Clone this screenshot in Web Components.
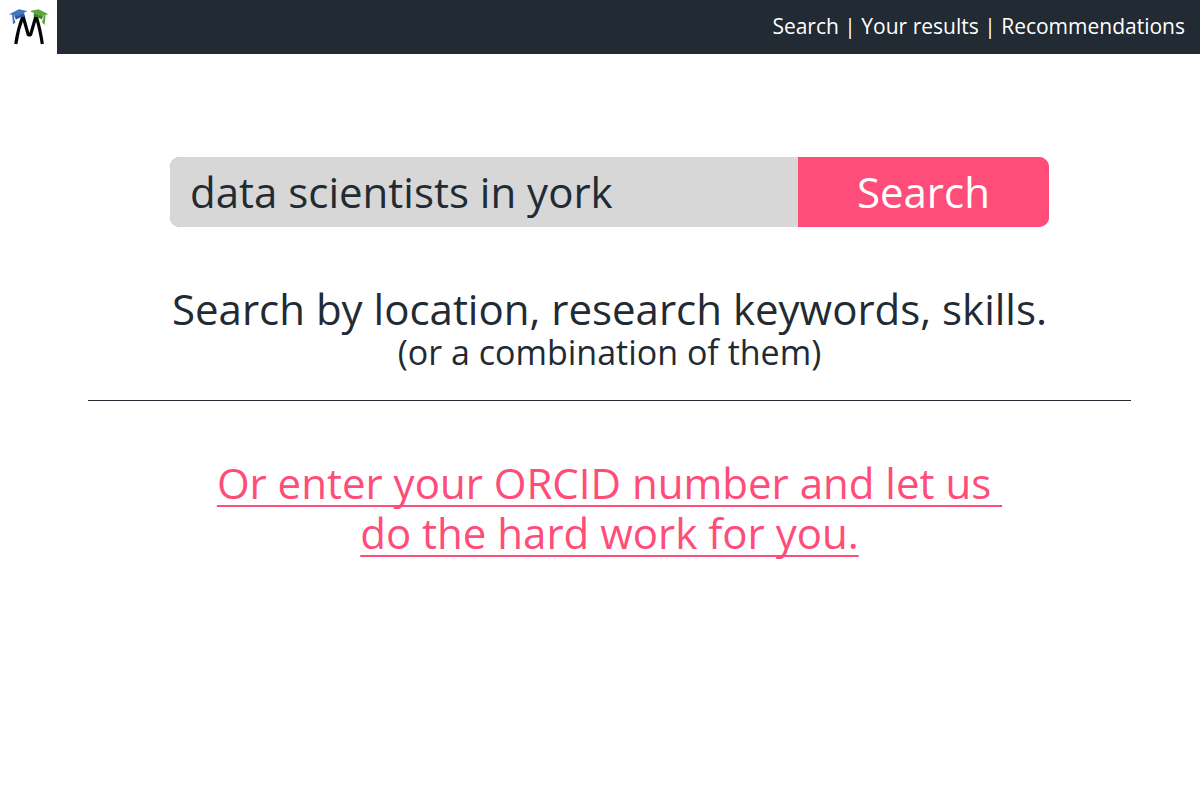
<!DOCTYPE html>
<html lang="en">
<head>
<meta charset="utf-8">
<title>Search</title>
<style>
  :root { --ink: #222a33; --accent: #ff4d79; --field: #d7d7d7; }
  body { margin: 0; background: #fff; color: var(--ink); font-family: "Open Sans", "Liberation Sans", sans-serif; }
</style>
</head>
<body>
<app-header>
  <nav-link href="#search">Search</nav-link>
  <nav-link href="#results">Your results</nav-link>
  <nav-link href="#recommendations">Recommendations</nav-link>
</app-header>
<search-page>
  <search-box slot="search" value="data scientists in york">Search</search-box>
  <search-hint slot="hint">Search by location, research keywords, skills.<span slot="note">(or a combination of them)</span></search-hint>
  <orcid-link slot="alternative" href="#orcid">Or enter your ORCID number and let us&nbsp;<br>do the hard work for you.</orcid-link>
</search-page>
<script>
  class BaseElement extends HTMLElement {
    connectedCallback() {
      if (!this.shadowRoot) this.attachShadow({ mode: "open" }).innerHTML = this.render();
    }
  }

  customElements.define("brand-logo", class extends BaseElement {
    render() {
      return `<style>
        :host { display: block; width: 57px; height: 54px; background: #fff; }
        svg { display: block; width: 57px; height: 54px; }
      </style>
      <svg viewBox="0 0 57 54" role="img" aria-label="Home">
        <path d="M15.800 44 C17 35 19.500 25 23 16 L28.300 35 H30.500 L36 16 C39 25 41 35 42.300 44" fill="none" stroke="#050505" stroke-width="3.200" stroke-linejoin="bevel"/>
        <path d="M14 15.500 24 13 25 16.500Q20 17 16 19.500Z" fill="#2c56a4"/>
        <path d="M9 14.200 19 9.200 27.300 11 18.500 16Z" fill="#4374c4"/>
        <path d="M12 14.500 13.800 15 14.300 19 15.500 22.500 13 24.500 12.500 19Z" fill="#4374c4"/>
        <path d="M34 13 43 15.500 42 19.500Q38 17 33.500 16.500Z" fill="#3d8128"/>
        <path d="M30 11 38.500 9.200 48.500 14.200 39.500 16Z" fill="#5ba53c"/>
        <path d="M43.500 15 45.500 14.500 45.300 19 44.500 25 41.800 22 43.200 19Z" fill="#5ba53c"/>
      </svg>`;
    }
  });

  customElements.define("nav-link", class extends BaseElement {
    render() {
      return `<style>
        :host { display: inline; }
        :host(:not(:first-of-type))::before { content: "| "; }
        a { color: inherit; text-decoration: none; }
      </style><a href="${this.getAttribute("href")}"><slot></slot></a>`;
    }
  });

  customElements.define("app-header", class extends BaseElement {
    render() {
      return `<style>
        :host { display: block; }
        header { display: flex; justify-content: space-between; align-items: center; background: var(--ink); color: #fff; }
        nav { padding: 0 15px 2px 0; font-size: 21px; line-height: 28px; }
      </style>
      <header><brand-logo></brand-logo><nav aria-label="Main"><slot></slot></nav></header>`;
    }
  });

  customElements.define("search-box", class extends BaseElement {
    render() {
      return `<style>
        :host { display: block; max-width: 879px; margin: 0 auto; }
        form { display: grid; grid-template-columns: 5fr 2fr; height: 70px; border-radius: 10px; overflow: hidden; background: var(--accent); }
        input, button { min-width: 0; margin: 0; border: 0; border-radius: 0; font: inherit; font-size: 42px; line-height: 58px; }
        input { padding: 0 20px; background: var(--field); color: var(--ink); outline: none; }
        button { padding: 0; background: var(--accent); color: #fff; cursor: pointer; }
      </style>
      <form role="search" onsubmit="return false">
        <input type="text" aria-label="Search terms" value="${this.getAttribute("value")}">
        <button type="submit"><slot></slot></button>
      </form>`;
    }
  });

  customElements.define("search-hint", class extends BaseElement {
    render() {
      return `<style>
        :host { display: block; text-align: center; }
        h1, p { margin: 0; font-weight: 400; }
        h1 { font-size: 42px; line-height: 50px; }
        p { font-size: 34px; line-height: 36px; }
      </style>
      <h1><slot></slot></h1><p><slot name="note"></slot></p>`;
    }
  });

  customElements.define("orcid-link", class extends BaseElement {
    render() {
      return `<style>
        :host { display: block; text-align: center; font-size: 42px; line-height: 50px; }
        a { color: var(--accent); text-decoration: underline 2px; text-underline-offset: 6px; text-decoration-skip-ink: none; }
      </style>
      <a href="${this.getAttribute("href")}"><slot></slot></a>`;
    }
  });

  customElements.define("search-page", class extends BaseElement {
    render() {
      return `<style>
        :host { display: block; }
        main { padding: 103px 69px 60px 88px; }
        hr { height: 1px; margin: 30px 0 57px; border: 0; background: var(--ink); }
        section { margin-top: 57px; }
      </style>
      <main>
        <slot name="search"></slot>
        <section><slot name="hint"></slot></section>
        <hr>
        <slot name="alternative"></slot>
      </main>`;
    }
  });
</script>
</body>
</html>
